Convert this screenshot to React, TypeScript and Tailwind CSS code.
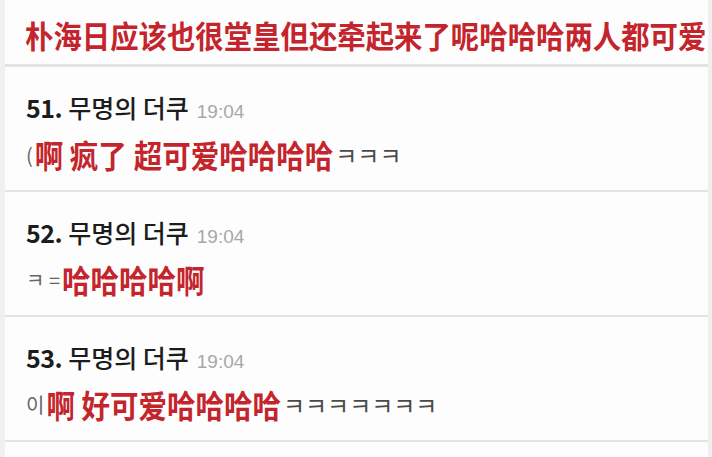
import React from "react";

type Comment = {
  no: number;
  name: string;
  time: string;
  before: string;
  sub: string[];
  after: string;
};

const comments: Comment[] = [
  { no: 51, name: "무명의 더쿠", time: "19:04", before: "(", sub: ["啊 疯了", "超可爱哈哈哈哈"], after: "ㅋㅋㅋ" },
  { no: 52, name: "무명의 더쿠", time: "19:04", before: "ㅋ =", sub: ["哈哈哈哈啊"], after: "" },
  { no: 53, name: "무명의 더쿠", time: "19:04", before: "이", sub: ["啊 好可爱哈哈哈哈"], after: "ㅋㅋㅋㅋㅋㅋㅋ" },
];

const kr = "font-['Noto_Sans_CJK_KR',sans-serif]";
const sc = "font-['Noto_Sans_CJK_SC',sans-serif]";

function Row({ c }: { c: Comment }) {
  return (
    <div className="h-[125px] border-b-2 border-[#e3e3e3] pl-[21px] pt-[25px]">
      <div className={`flex items-baseline h-[30px] leading-[30px] ${kr}`}>
        <span className="text-[25px] font-bold text-[#1c1c1c] tracking-[-0.5px]">{c.no}.</span>
        <span className="ml-[6px] text-[25px] font-medium text-[#1c1c1c]">{c.name}</span>
        <span className="ml-[8px] text-[19px] text-[#a8a8a8] font-['Liberation_Sans',sans-serif]">{c.time}</span>
      </div>
      <div className="mt-[15px] flex items-center h-[36px]">
        <span className={`text-[20px] text-[#666] ${kr}`}>{c.before}</span>
        {c.sub.map((s, i) => (
          <span
            key={i}
            className={`${i > 0 ? "ml-[7px]" : "ml-[2px]"} inline-block scale-y-110 text-[28.5px] leading-[36px] font-bold text-[#c4252c] ${sc}`}
          >
            {s}
          </span>
        ))}
        {c.after && <span className={`ml-[2px] text-[24px] text-[#4a4a4a] ${kr}`}>{c.after}</span>}
      </div>
    </div>
  );
}

export default function App() {
  return (
    <div className="flex h-[457px] w-[712px] overflow-hidden bg-[#fdfdfd]">
      <div className="w-[5px] bg-[#f0f0f2]" />
      <div className="flex-1">
        <div className="h-[67px] border-b-[3px] border-[#e3e3e3] pl-[20px] pt-[15px]">
          <span className={`inline-block scale-y-110 whitespace-nowrap text-[28.4px] leading-[40px] font-bold text-[#c4252c] ${sc}`}>
            朴海日应该也很堂皇但还牵起来了呢哈哈哈两人都可爱
          </span>
        </div>
        {comments.map((c) => (
          <Row key={c.no} c={c} />
        ))}
      </div>
      <div className="w-[4px] bg-[#efefef]" />
    </div>
  );
}
